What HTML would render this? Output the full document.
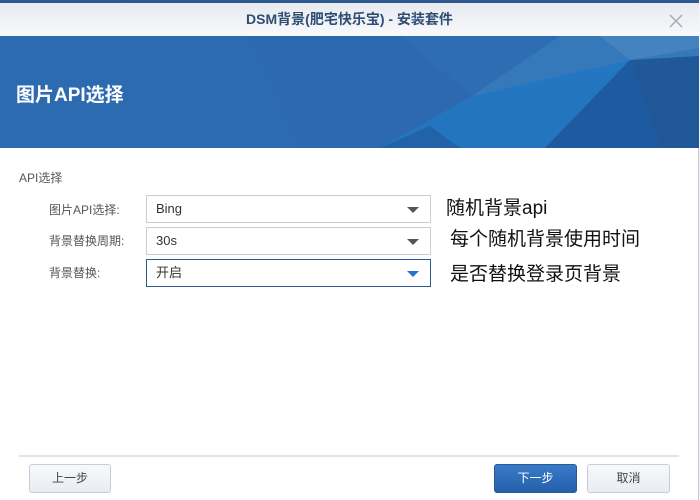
<!DOCTYPE html>
<html><head><meta charset="utf-8"><style>
*{margin:0;padding:0;box-sizing:border-box}
body{width:700px;height:500px;overflow:hidden;background:#f4f5f7;font-family:"Liberation Sans","Noto Sans CJK SC",sans-serif;position:relative}
.win{position:absolute;left:0;top:0;width:699px;height:500px;background:#fff;border-right:1px solid #c8ccd2}
.top{position:absolute;left:0;top:0;width:699px;height:3px;background:#2d5a8e}
.title{position:absolute;top:3px;left:0;width:699px;height:33px;background:linear-gradient(#e6eaf0,#f8f9fb);text-align:center;line-height:33px;font-size:14px;font-weight:bold;color:#2e4d74}
.close{position:absolute;right:16px;top:11px;width:14px;height:14px}
.banner{position:absolute;top:36px;left:0;width:699px;height:112px;background:#2c6bb0;overflow:hidden}
.banner h1{position:absolute;left:16px;top:44px;color:#fff;font-size:19px;font-weight:bold}
.lbl{position:absolute;font-size:12px;color:#555}
.sel{position:absolute;left:146px;width:285px;height:28px;border:1px solid #c6cfd8;font-size:13px;color:#333;line-height:26px;padding-left:9px;background:#fff}
.sel.act{border-color:#2b5a93}
.sel:after{content:"";position:absolute;right:11px;top:11px;border-left:6px solid transparent;border-right:6px solid transparent;border-top:6px solid #555}
.sel.act:after{border-top-color:#2a6fc9}
.note{position:absolute;font-size:19px;color:#111}
.btn{position:absolute;top:464px;height:29px;border:1px solid #c5ced8;border-radius:3px;background:linear-gradient(#f7f9fb,#e8edf2);font-size:12px;color:#444;text-align:center;line-height:27px}
.btn.p{background:linear-gradient(#3a7bc8,#2460ab);border-color:#2a5b98;color:#fff}
</style></head><body>
<div class="win">
<div class="top"></div>
<div class="title">DSM背景(肥宅快乐宝) - 安装套件<svg class="close" viewBox="0 0 14 14"><path d="M1 1L13 13M13 1L1 13" stroke="#a8acb2" stroke-width="1.5"/></svg></div>
<div class="banner">
<svg width="699" height="112" style="position:absolute;left:0;top:0">
<polygon points="250,0 400,0 472,60 380,112 300,112" fill="#2c69ae"/>
<polygon points="400,0 560,0 472,60" fill="#2e6db1"/>
<polygon points="560,0 699,0 699,20 472,60" fill="#3a7dbe" opacity=".8"/>
<polygon points="472,60 699,20 630,24" fill="#2a78c0"/>
<polygon points="472,60 630,24 545,112 380,112" fill="#2277c2" opacity=".9"/>
<polygon points="600,0 699,0 699,12 630,24" fill="#4a88c2" opacity=".7"/>
<polygon points="630,24 699,20 699,112 660,112" fill="#1f5596" opacity=".9"/>
<polygon points="630,24 545,112 660,112" fill="#1e5aa0"/>
<polygon points="380,112 430,90 460,112" fill="#225a9c" opacity=".7"/>
</svg>
<h1>图片API选择</h1>
</div>
<div class="lbl" style="left:19px;top:169px">API选择</div>
<div class="lbl" style="left:49px;top:201px">图片API选择:</div>
<div class="lbl" style="left:49px;top:232px">背景替换周期:</div>
<div class="lbl" style="left:49px;top:264px">背景替换:</div>
<div class="sel" style="top:195px">Bing</div>
<div class="sel" style="top:227px">30s</div>
<div class="sel act" style="top:259px">开启</div>
<div class="note" style="left:446px;top:193px">随机背景api</div>
<div class="note" style="left:450px;top:224px">每个随机背景使用时间</div>
<div class="note" style="left:450px;top:259px">是否替换登录页背景</div>
<div style="position:absolute;left:19px;top:455px;height:2px;background:#e2e4e8;width:660px"></div>
<div class="btn" style="left:29px;width:82px">上一步</div>
<div class="btn p" style="left:494px;width:83px">下一步</div>
<div class="btn" style="left:587px;width:83px">取消</div>
</div>
</body></html>
